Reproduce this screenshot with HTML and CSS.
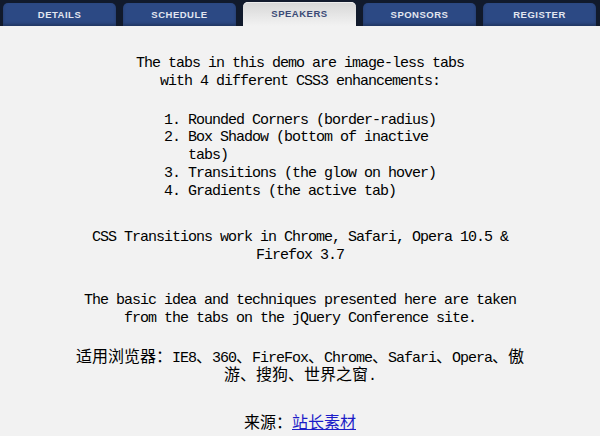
FILE: index.html
```html
<!DOCTYPE html>
<html lang="zh-CN">
<head>
<meta charset="utf-8">
<title>CSS3 Tabs</title>
<link rel="stylesheet" href="styles.css">
</head>
<body>
<nav class="tabs">
  <a class="tab" href="#">DETAILS</a>
  <a class="tab" href="#">SCHEDULE</a>
  <a class="tab active" href="#">SPEAKERS</a>
  <a class="tab" href="#">SPONSORS</a>
  <a class="tab" href="#">REGISTER</a>
</nav>
<main class="content">
  <p class="intro">The tabs in this demo are image-less tabs<br>with 4 different CSS3 enhancements:</p>
  <ol class="features">
    <li>Rounded Corners (border-radius)</li>
    <li>Box Shadow (bottom of inactive tabs)</li>
    <li>Transitions (the glow on hover)</li>
    <li>Gradients (the active tab)</li>
  </ol>
  <p class="note note-support">CSS Transitions work in Chrome, Safari, Opera 10.5 &amp; Firefox 3.7</p>
  <p class="note note-idea">The basic idea and techniques presented here are taken from the tabs on the jQuery Conference site.</p>
  <p class="note note-browsers"><span class="cjk">适用浏览器：</span>IE8<span class="cjk">、</span>360<span class="cjk">、</span>FireFox<span class="cjk">、</span>Chrome<span class="cjk">、</span>Safari<span class="cjk">、</span>Opera<span class="cjk">、傲游、搜狗、世界之窗</span>.</p>
  <p class="note note-source"><span class="cjk">来源：</span><a class="source-link cjk" href="#">站长素材</a></p>
</main>
</body>
</html>
```

FILE: styles.css
```css
html, body {
  margin: 0;
  padding: 0;
  background: #f2f2f2;
}

body {
  font-family: "Liberation Mono", "DejaVu Sans Mono", monospace;
  font-size: 15px;
  letter-spacing: -1px;
  line-height: 17.75px;
  color: #000;
}

.tabs {
  display: flex;
  gap: 7px;
  height: 26px;
  padding: 3px 0 0 3px;
  box-sizing: border-box;
  background: #111a2c;
  align-items: flex-end;
}

.tab {
  width: 113px;
  height: 23px;
  display: flex;
  align-items: center;
  justify-content: center;
  background: #2c4984;
  border-radius: 5px 5px 0 0;
  box-shadow: inset 0 -2px 3px rgba(0, 0, 0, 0.25);
  color: #e2e6f0;
  text-decoration: none;
  font-family: "Liberation Sans", Arial, sans-serif;
  font-weight: bold;
  font-size: 9.5px;
  letter-spacing: 0.5px;
  line-height: 1;
}

.tab.active {
  height: 24px;
  background: linear-gradient(#d6d6d6, #e6e6e6 55%, #f2f2f2);
  box-shadow: inset 0 1px 0 #ececec;
  color: #3a4a76;
}

.content {
  width: 456px;
  margin: 0 auto;
  padding-top: 29px;
  text-align: center;
}

.content p {
  margin: 0;
}

.features {
  width: 304px;
  margin: 21px auto 0;
  padding: 0 0 0 40px;
  box-sizing: border-box;
  text-align: left;
}

.content .note-support {
  margin-top: 29px;
}

.content .note-idea {
  margin-top: 27px;
}

.content .note-browsers {
  margin-top: 23px;
}

.content .note-source {
  margin-top: 30px;
}

.cjk {
  font-family: "Noto Sans CJK SC", sans-serif;
  font-size: 16px;
  line-height: 11px;
  letter-spacing: 0;
}

.source-link {
  color: #1c1cc8;
  text-decoration: underline;
}
```
